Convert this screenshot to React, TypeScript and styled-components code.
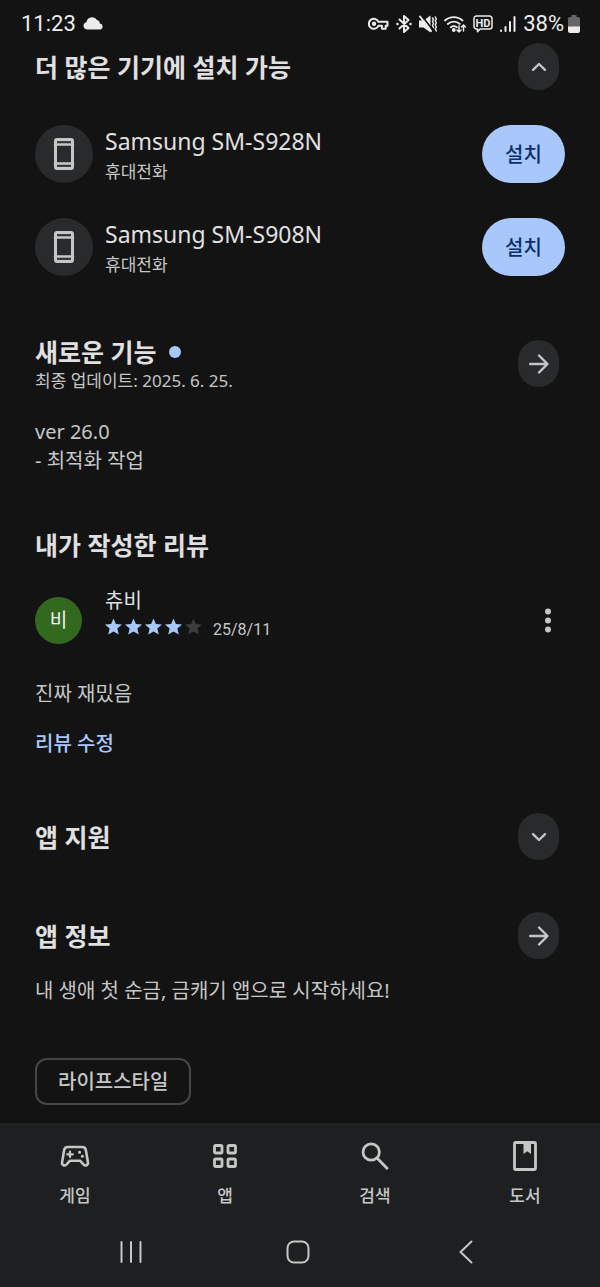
import React from "react";
import styled, { createGlobalStyle } from "styled-components";

const color = {
  page: "#131313",
  bar: "#1e1f20",
  surface: "#292a2c",
  title: "#e0e0e0",
  body: "#c5c6c6",
  accent: "#a8c7fa",
  onAccent: "#0b2f6b",
};

const GlobalStyle = createGlobalStyle`
  * { box-sizing: border-box; }
  body {
    margin: 0;
    background: ${color.page};
    color: ${color.body};
    font-family: "Noto Sans", "Noto Sans CJK KR", sans-serif;
    font-size: 20px;
    line-height: 29px;
  }
  h2, p, ul { margin: 0; padding: 0; }
  button { font: inherit; color: inherit; border: 0; padding: 0; background: none; cursor: pointer; }
  a { color: inherit; text-decoration: none; }
  svg { display: block; flex: none; }
`;

const Screen = styled.div`
  min-height: 100vh;
  display: flex;
  flex-direction: column;
`;

const StatusBar = styled.header`
  display: flex;
  align-items: center;
  justify-content: space-between;
  height: 43px;
  padding: 4px 20px 0 21px;
  font-family: Roboto, sans-serif;
  font-size: 22px;
  color: #ececec;
`;

const StatusGroup = styled.div`
  display: flex;
  align-items: center;
  gap: 7px;
`;

const BatteryLevel = styled.span`
  display: flex;
  align-items: center;
  gap: 4px;
`;

const Content = styled.main`
  flex: 1;
  padding: 0 35px 18px;
`;

const Section = styled.section<{ $gap?: number }>`
  margin-top: ${(p) => p.$gap ?? 0}px;
`;

const SectionHead = styled.div`
  display: flex;
  align-items: center;
  justify-content: space-between;
  padding-right: 6px;
`;

const TitleGroup = styled.div`
  display: grid;
  gap: 1px;
`;

const Title = styled.h2`
  display: flex;
  align-items: center;
  gap: 12px;
  font-size: 25px;
  line-height: 34px;
  font-weight: 700;
  color: ${color.title};
`;

const NewDot = styled.span`
  width: 12px;
  height: 12px;
  border-radius: 50%;
  background: ${color.accent};
`;

const RoundButton = styled.button`
  display: grid;
  place-items: center;
  width: 41px;
  height: 47px;
  border-radius: 21px;
  background: ${color.surface};
`;

const DeviceList = styled.ul`
  display: grid;
  gap: 35px;
  margin-top: 35px;
  list-style: none;
`;

const DeviceRow = styled.li`
  display: flex;
  align-items: center;
  gap: 12px;
`;

const DeviceIcon = styled.span`
  display: grid;
  place-items: center;
  width: 58px;
  height: 58px;
  border-radius: 50%;
  background: ${color.surface};
`;

const DeviceText = styled.div`
  flex: 1;
  display: grid;
  gap: 4px;
`;

const DeviceName = styled.p`
  font-size: 23px;
  line-height: 32px;
  color: ${color.title};
`;

const Caption = styled.p`
  font-size: 17px;
  line-height: 22px;
`;

const InstallButton = styled.button`
  width: 83px;
  height: 58px;
  border-radius: 29px;
  font-weight: 500;
  background: ${color.accent};
  color: ${color.onAccent};
`;

const Paragraph = styled.p<{ $gap: number }>`
  margin-top: ${(p) => p.$gap}px;
`;

const Review = styled.div`
  display: flex;
  align-items: center;
  margin-top: 24px;
`;

const Avatar = styled.span`
  display: grid;
  place-items: center;
  width: 47px;
  height: 47px;
  border-radius: 50%;
  background: #33691e;
  color: #f4f4f4;
  font-size: 19px;
`;

const ReviewInfo = styled.div`
  flex: 1;
  padding: 0 0 18px 23px;
  color: ${color.title};
`;

const Rating = styled.div`
  display: flex;
  align-items: center;
  gap: 11px;
  height: 22px;
`;

const Stars = styled.span`
  display: flex;
  gap: 3px;
`;

const ReviewDate = styled.span`
  padding-top: 8px;
  font-family: Roboto, sans-serif;
  font-size: 16px;
  line-height: 22px;
  color: ${color.body};
`;

const MenuButton = styled.button`
  display: grid;
  place-items: center;
  width: 35px;
  height: 47px;
`;

const EditLink = styled.a`
  display: inline-block;
  margin-top: 21px;
  font-weight: 500;
  color: ${color.accent};
`;

const Chip = styled.button`
  display: block;
  height: 47px;
  margin-top: 53px;
  padding: 0 21px;
  border: 2px solid #444746;
  border-radius: 12px;
  font-weight: 500;
`;

const BottomArea = styled.footer`
  background: ${color.bar};
`;

const Tabs = styled.nav`
  display: grid;
  grid-template-columns: repeat(4, 1fr);
  height: 94px;
  padding-top: 17px;
`;

const Tab = styled.a`
  display: flex;
  flex-direction: column;
  align-items: center;
  gap: 12px;
  font-size: 17px;
  line-height: 24px;
  font-weight: 500;
`;

const SystemBar = styled.div`
  display: grid;
  grid-template-columns: repeat(3, 1fr);
  height: 70px;
  padding: 0 50px 0 47px;
`;

const SystemButton = styled.button`
  display: grid;
  place-items: center;
`;

const stroke = (width: number) => ({
  fill: "none",
  stroke: "currentColor",
  strokeWidth: width,
  strokeLinecap: "round" as const,
  strokeLinejoin: "round" as const,
});

const Cloud = () => (
  <svg width="21" height="13" viewBox="0 0 21 13" fill="currentColor">
    <path d="M4 12.500A3.700 3.700 0 0 1 3.400 5.200 5.800 5.800 0 0 1 14 3a3.800 3.800 0 0 1 2.800 3.600 3 3 0 0 1 .6 5.900z" />
  </svg>
);

const Key = () => (
  <svg width="21" height="14" viewBox="0 0 21 14" {...stroke(2)}>
    <path d="M10.400 4.800h9.100v4h-1.800v3h-3.800v-3h-3.500A5 5 0 1 1 10.400 4.800z" />
    <circle cx="6" cy="6.800" r="1.200" />
  </svg>
);

const Bluetooth = () => (
  <svg width="16" height="18" viewBox="0 0 16 18" {...stroke(2)}>
    <path d="M3.500 4.500l9 8.500L8 17V1l4.500 4-9 8.500" />
    <path d="M1.400 9h.1M14.500 9h.1" strokeWidth="2.400" />
  </svg>
);

const Mute = () => (
  <svg width="18" height="18" viewBox="0 0 18 18">
    <path d="M0 5.500h4.500L11.500.500v17L4.500 12.500H0z" fill="currentColor" />
    <path d="M2.500.500l11 14" stroke={color.page} strokeWidth="1.600" />
    <path d="M1 1.500l11 14.500" {...stroke(2)} />
    <path d="M13.500 3l1 1.500-1 2 1 2-1 2 1 2M16.300 2l1 2-1 2 1 2-1 2 1 2-1 2 1 2" {...stroke(1.5)} />
  </svg>
);

const Wifi = () => (
  <svg width="22" height="18" viewBox="0 0 22 18" {...stroke(1.8)}>
    <path d="M1 5.500a13 13 0 0 1 17.500 0M3.800 9a9 9 0 0 1 12 0M6.800 12.300a5 5 0 0 1 6 0" />
    <circle cx="9.800" cy="15" r="1" fill="currentColor" />
    <path d="M15 11v6m-2-2l2 2 2-2M19.500 16v-6m-2 2l2-2 2 2" strokeWidth="1.500" />
  </svg>
);

const HdCall = () => (
  <svg width="20" height="18" viewBox="0 0 20 18">
    <path
      d="M3.500 1h13a2.500 2.500 0 0 1 2.500 2.500v8a2.500 2.500 0 0 1-2.500 2.500H7l-2.500 2.800V14h-1A2.500 2.500 0 0 1 1 11.500v-8A2.500 2.500 0 0 1 3.500 1z"
      {...stroke(1.5)}
    />
    <text x="10" y="11.700" textAnchor="middle" fontSize="11" fontWeight="700" fill="currentColor">
      HD
    </text>
  </svg>
);

const Signal = () => (
  <svg width="16" height="18" viewBox="0 0 16 18" {...stroke(2)}>
    <path d="M1 15.500v.5M5.500 12v4M10 7v9M14.500 2v14" />
  </svg>
);

const Battery = () => (
  <svg width="12" height="18" viewBox="0 0 12 18">
    <path d="M3.500 0h5v2H10a2 2 0 0 1 2 2v8H0V4a2 2 0 0 1 2-2h1.500z" fill="#666" />
    <path d="M0 11.500h12V16a2 2 0 0 1-2 2H2a2 2 0 0 1-2-2z" fill="currentColor" />
  </svg>
);

const Chevron = ({ up }: { up?: boolean }) => (
  <svg width="16" height="10" viewBox="0 0 16 10" {...stroke(2.4)}>
    <path d={up ? "M2 7.800L8 2l6 5.800" : "M2 2.200L8 8l6-5.800"} />
  </svg>
);

const ArrowRight = () => (
  <svg width="22" height="22" viewBox="0 0 22 22" {...stroke(2.4)}>
    <path d="M2.200 11h17M11 2.500l8.500 8.500-8.500 8.500" />
  </svg>
);

const Phone = () => (
  <svg width="22" height="34" viewBox="0 0 22 34">
    <rect x="2.500" y="2.500" width="17" height="29" rx="1.500" {...stroke(3)} />
    <path d="M2 7.500h18M2 26.500h18" {...stroke(2.6)} />
    <path d="M4 4.800h14M4 29.200h14" stroke="#4c4d4e" strokeWidth="1" />
  </svg>
);

const Star = ({ filled }: { filled: boolean }) => (
  <svg width="17" height="17" viewBox="2 2 20 19" fill={filled ? color.accent : "#3b3c3d"}>
    <path d="M12 17.270L18.180 21l-1.640-7.030L22 9.240l-7.190-.610L12 2 9.190 8.630 2 9.240l5.460 4.730L5.820 21z" />
  </svg>
);

const MoreDots = () => (
  <svg width="6" height="25" viewBox="0 0 6 25" fill="currentColor">
    <circle cx="3" cy="3.500" r="3" />
    <circle cx="3" cy="12.500" r="3" />
    <circle cx="3" cy="21.500" r="3" />
  </svg>
);

const Gamepad = () => (
  <svg width="30" height="32" viewBox="0 0 30 32" {...stroke(2.6)}>
    <path d="M8 7h14c2.300 0 3.600 1.100 3.900 3.300l2 12c.5 3-2.500 4-4.200 2.300l-3.500-3.800H9.800l-3.500 3.800c-1.700 1.700-4.700.7-4.200-2.300l2-12C4.400 8.100 5.700 7 8 7z" />
    <path d="M10 11.500v5.600M7.200 14.300h5.600" strokeWidth="2.200" />
    <path d="M19.500 12.200h.1M22.300 16.200h.1" strokeWidth="3" />
  </svg>
);

const AppsGrid = () => (
  <svg width="24" height="32" viewBox="0 0 24 32" {...stroke(2.8)}>
    <rect x="1.500" y="5.500" width="7.500" height="7.500" rx="1.200" />
    <rect x="15" y="5.500" width="7.500" height="7.500" rx="1.200" />
    <rect x="1.500" y="19" width="7.500" height="7.500" rx="1.200" />
    <rect x="15" y="19" width="7.500" height="7.500" rx="1.200" />
  </svg>
);

const Search = () => (
  <svg width="28" height="32" viewBox="0 0 28 32" {...stroke(2.8)}>
    <circle cx="10.200" cy="12" r="8.200" />
    <path d="M16.200 18.200l9.800 10" />
  </svg>
);

const Book = () => (
  <svg width="24" height="32" viewBox="0 0 24 32" {...stroke(2.8)}>
    <rect x="1.500" y="2.500" width="21" height="27" rx="1" />
    <path d="M10.500 3h7.500v11l-3.750-2.800L10.500 14z" fill="currentColor" stroke="none" />
  </svg>
);

const Recents = () => (
  <svg width="22" height="24" viewBox="0 0 22 24" {...stroke(2)}>
    <path d="M1.500 2v20M11 2v20M20.500 2v20" />
  </svg>
);

const Home = () => (
  <svg width="24" height="24" viewBox="0 0 24 24" {...stroke(2)}>
    <rect x="1.500" y="1.500" width="21" height="21" rx="6.500" />
  </svg>
);

const Back = () => (
  <svg width="14" height="24" viewBox="0 0 14 24" {...stroke(2)}>
    <path d="M12.500 1.500L1.500 12l11 10.500" />
  </svg>
);

const devices = ["Samsung SM-S928N", "Samsung SM-S908N"];

const tabs = [
  { label: "게임", icon: <Gamepad /> },
  { label: "앱", icon: <AppsGrid /> },
  { label: "검색", icon: <Search /> },
  { label: "도서", icon: <Book /> },
];

export default function App() {
  return (
    <Screen>
      <GlobalStyle />
      <StatusBar>
        <StatusGroup>
          <span>11:23</span>
          <Cloud />
        </StatusGroup>
        <StatusGroup>
          <Key />
          <Bluetooth />
          <Mute />
          <Wifi />
          <HdCall />
          <Signal />
          <BatteryLevel>
            <span>38%</span>
            <Battery />
          </BatteryLevel>
        </StatusGroup>
      </StatusBar>

      <Content>
        <Section>
          <SectionHead>
            <Title>더 많은 기기에 설치 가능</Title>
            <RoundButton aria-label="접기">
              <Chevron up />
            </RoundButton>
          </SectionHead>
          <DeviceList>
            {devices.map((name) => (
              <DeviceRow key={name}>
                <DeviceIcon>
                  <Phone />
                </DeviceIcon>
                <DeviceText>
                  <DeviceName>{name}</DeviceName>
                  <Caption>휴대전화</Caption>
                </DeviceText>
                <InstallButton>설치</InstallButton>
              </DeviceRow>
            ))}
          </DeviceList>
        </Section>

        <Section $gap={59}>
          <SectionHead>
            <TitleGroup>
              <Title>
                새로운 기능
                <NewDot />
              </Title>
              <Caption>최종 업데이트: 2025. 6. 25.</Caption>
            </TitleGroup>
            <RoundButton aria-label="새로운 기능 더보기">
              <ArrowRight />
            </RoundButton>
          </SectionHead>
          <Paragraph $gap={25}>
            ver 26.0
            <br />- 최적화 작업
          </Paragraph>
        </Section>

        <Section $gap={53}>
          <Title>내가 작성한 리뷰</Title>
          <Review>
            <Avatar>비</Avatar>
            <ReviewInfo>
              <p>츄비</p>
              <Rating>
                <Stars role="img" aria-label="별점 4점">
                  {[1, 2, 3, 4, 5].map((n) => (
                    <Star key={n} filled={n <= 4} />
                  ))}
                </Stars>
                <ReviewDate>25/8/11</ReviewDate>
              </Rating>
            </ReviewInfo>
            <MenuButton aria-label="옵션">
              <MoreDots />
            </MenuButton>
          </Review>
          <Paragraph $gap={24}>진짜 재밌음</Paragraph>
          <EditLink href="#review">리뷰 수정</EditLink>
        </Section>

        <Section $gap={55}>
          <SectionHead>
            <Title>앱 지원</Title>
            <RoundButton aria-label="펼치기">
              <Chevron />
            </RoundButton>
          </SectionHead>
        </Section>

        <Section $gap={52}>
          <SectionHead>
            <Title>앱 정보</Title>
            <RoundButton aria-label="앱 정보 더보기">
              <ArrowRight />
            </RoundButton>
          </SectionHead>
          <Paragraph $gap={17}>내 생애 첫 순금, 금캐기 앱으로 시작하세요!</Paragraph>
          <Chip>라이프스타일</Chip>
        </Section>
      </Content>

      <BottomArea>
        <Tabs>
          {tabs.map((tab) => (
            <Tab key={tab.label} href="#">
              {tab.icon}
              {tab.label}
            </Tab>
          ))}
        </Tabs>
        <SystemBar>
          <SystemButton aria-label="최근 앱">
            <Recents />
          </SystemButton>
          <SystemButton aria-label="홈">
            <Home />
          </SystemButton>
          <SystemButton aria-label="뒤로">
            <Back />
          </SystemButton>
        </SystemBar>
      </BottomArea>
    </Screen>
  );
}
